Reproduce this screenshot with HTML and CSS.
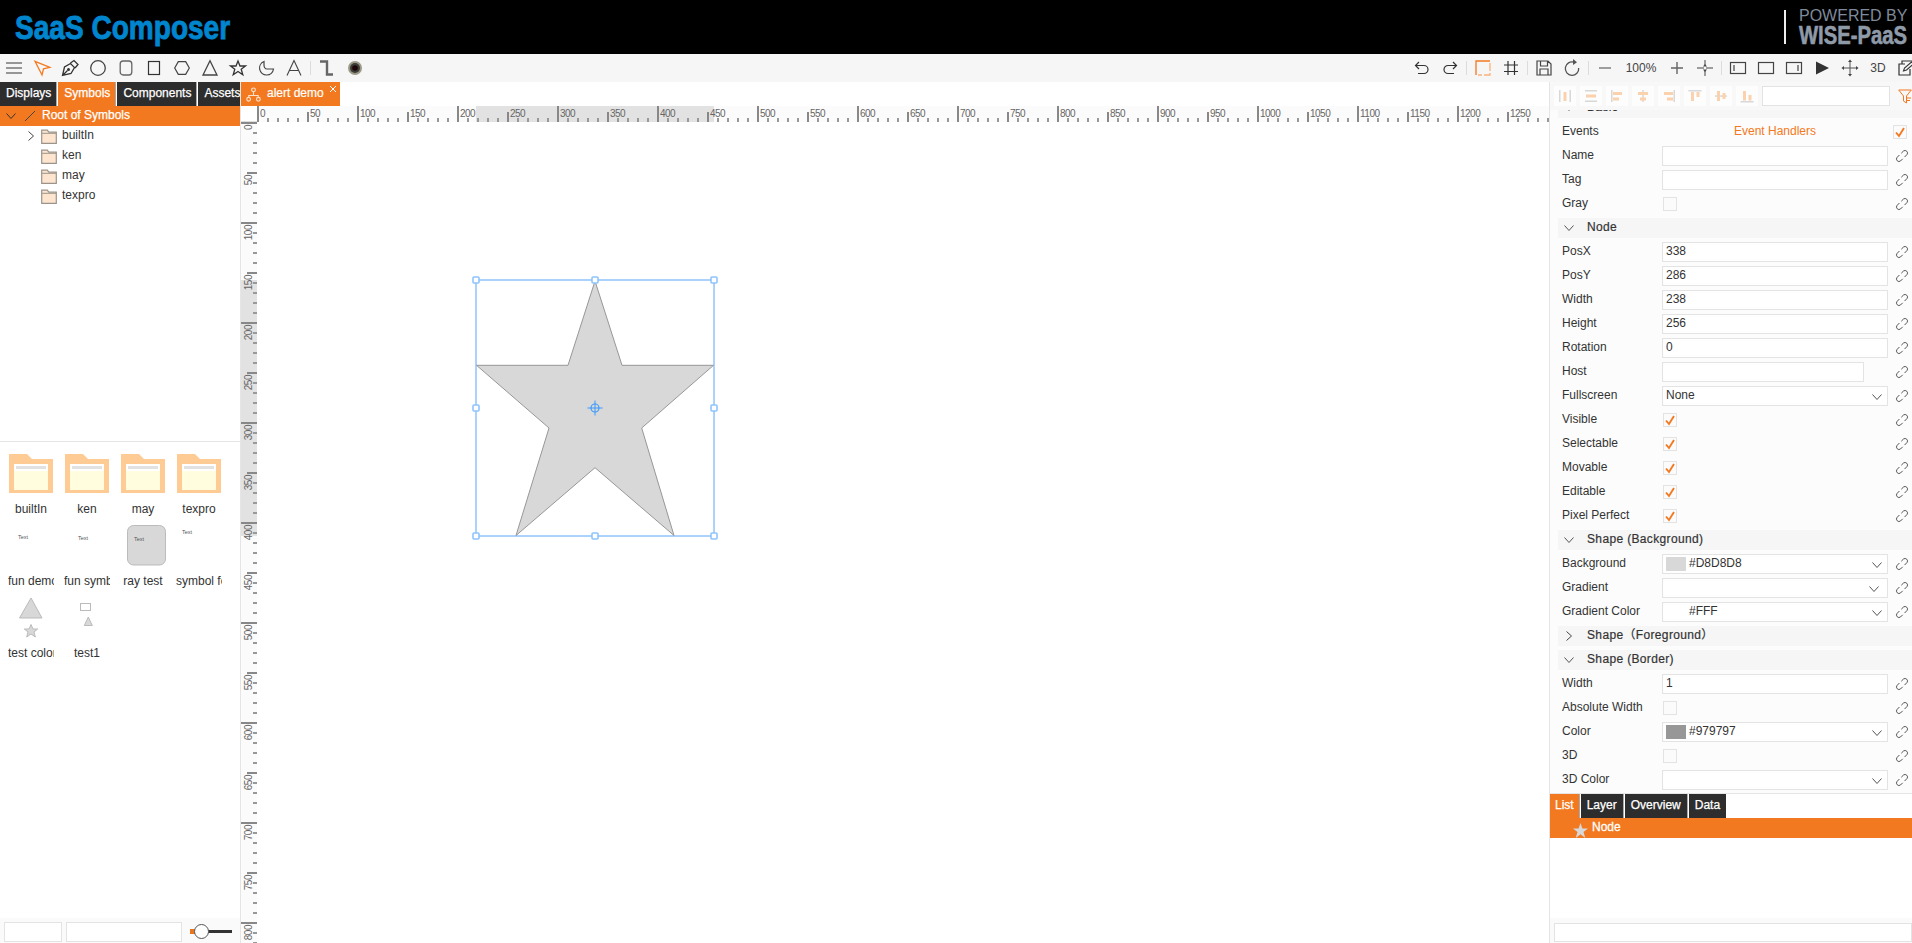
FILE: index.html
```html
<!DOCTYPE html>
<html lang="en">
<head>
<meta charset="utf-8">
<title>SaaS Composer</title>
<link rel="stylesheet" href="styles.css">
</head>
<body>
<svg class="defs" xmlns="http://www.w3.org/2000/svg">
  <symbol id="link" viewBox="0 0 14 14"><path d="M6.3 4.2 8.5 2a2.5 2.5 0 0 1 3.5 3.5L9.6 8M4.4 6 2 8.5A2.5 2.5 0 0 0 5.5 12l2.2-2.2" fill="none" stroke="#555" stroke-width="1"/></symbol>
  <symbol id="chk" viewBox="0 0 14 14"><path d="M3 7.5 6 11 11 3" fill="none" stroke="#f37920" stroke-width="1.9"/></symbol>
  <symbol id="down" viewBox="0 0 12 8"><path d="M1.5 1.5 6 6.5l4.500-5" fill="none" stroke="#555" stroke-width="1"/></symbol>
  <symbol id="right" viewBox="0 0 8 12"><path d="M1.500 1.500 6.500 6l-5 4.500" fill="none" stroke="#444" stroke-width="1"/></symbol>
  <symbol id="tfolder" viewBox="0 0 16 15"><path d="M.7 14.300V1.200h5.600l1.500 2h7.500v11.100z" fill="#fde5cf" stroke="#9c948a" stroke-width="1.200"/><path d="M1 4.300h14" stroke="#9c948a" stroke-width="1"/></symbol>
  <symbol id="bfolder" viewBox="0 0 44 39"><path d="M0 39V0h18l5 5h21v34z" fill="#ffcb94"/><rect x="5" y="10" width="34" height="26" fill="#fffddd"/><rect x="5" y="10" width="34" height="7" fill="#fff"/><rect x="7" y="12" width="30" height="3" fill="#e2e2e2"/></symbol>
</svg>

<header class="topbar">
  <div class="logo"><span>SaaS Composer</span></div>
  <div class="powered">
    <div class="pw1">POWERED BY</div>
    <div class="pw2"><span>WISE-PaaS</span></div>
  </div>
</header>

<nav class="toolbar">
  <div class="tgroup">
    <span class="tb"><svg viewBox="0 0 20 20"><path d="M2 5h16M2 10h16M2 15h16" stroke="#777" stroke-width="1.700"/></svg></span>
    <span class="tb"><svg viewBox="0 0 20 20"><path d="M3 3.300 18 9.300l-6.500 1.500L10 17z" fill="none" stroke="#f37920" stroke-width="1.300"/></svg></span>
    <span class="tb"><svg viewBox="0 0 20 20"><path d="M2.500 17.500 4.500 9l6-3.500 4 4L11 15.500zM2.500 17.500 7.500 12.500" fill="none" stroke="#333" stroke-width="1.300"/><circle cx="8.500" cy="11.500" r="1.500" fill="#333"/><path d="M10.500 5 14 2.500l4 4-3 3.500" fill="none" stroke="#333" stroke-width="1.300"/></svg></span>
    <span class="tb"><svg viewBox="0 0 20 20"><circle cx="10" cy="10" r="7.300" fill="none" stroke="#444" stroke-width="1.300"/></svg></span>
    <span class="tb"><svg viewBox="0 0 20 20"><rect x="4.200" y="3" width="11.600" height="14" rx="3" fill="none" stroke="#666" stroke-width="1.300"/></svg></span>
    <span class="tb"><svg viewBox="0 0 20 20"><rect x="4.500" y="3.500" width="11" height="13" fill="none" stroke="#333" stroke-width="1.200"/></svg></span>
    <span class="tb"><svg viewBox="0 0 20 20"><path d="M2.700 10 6.300 3.700h7.400L17.300 10l-3.600 6.300H6.300z" fill="none" stroke="#444" stroke-width="1.200"/></svg></span>
    <span class="tb"><svg viewBox="0 0 20 20"><path d="M10 2.700 17 17H3z" fill="none" stroke="#444" stroke-width="1.300"/></svg></span>
    <span class="tb"><svg viewBox="0 0 20 20"><path d="m10 3 2 5h5.500l-4.300 3.300 1.600 5.400L10 13.500l-4.800 3.200 1.600-5.400L2.500 8H8z" fill="none" stroke="#333" stroke-width="1.300"/></svg></span>
    <span class="tb"><svg viewBox="0 0 20 20"><path d="M8 3.500A7 7 0 1 0 17.500 11H11C9 11 8 9 8 7z" fill="none" stroke="#444" stroke-width="1.200"/></svg></span>
    <span class="tb"><svg viewBox="0 0 20 20"><path d="M3 17.500 10 2.500l7 15M5.300 12.500h9.400" fill="none" stroke="#444" stroke-width="1.100"/></svg></span>
    <i class="tsep"></i>
    <span class="tb"><svg viewBox="0 0 20 20"><path d="M3 3.500h7v13h6" fill="none" stroke="#666" stroke-width="2.400"/></svg></span>
    <span class="tb"><svg viewBox="0 0 20 20"><circle cx="10" cy="10" r="7" fill="#9a9a86"/><circle cx="10" cy="10" r="5" fill="#3c3c38"/><circle cx="10" cy="10" r="2.800" fill="#1e0606"/></svg></span>
  </div>
  <div class="tgroup tright">
    <span class="tb"><svg viewBox="0 0 20 20"><path d="M7 4 3.500 7.500 7 11M3.500 7.500H12a4 4 0 0 1 0 8H6" fill="none" stroke="#333" stroke-width="1.200"/></svg></span>
    <span class="tb"><svg viewBox="0 0 20 20"><path d="m13 4 3.500 3.500L13 11M16.500 7.500H8a4 4 0 0 0 0 8h6" fill="none" stroke="#333" stroke-width="1.200"/></svg></span>
    <i class="tsep"></i>
    <span class="tb"><svg viewBox="0 0 20 20"><path d="M3 17V3h14" fill="none" stroke="#f37920" stroke-width="1.300"/><path d="M17 5v12H5" fill="none" stroke="#f9b27c" stroke-width="1.300" stroke-dasharray="8 2"/></svg></span>
    <span class="tb"><svg viewBox="0 0 20 20"><path d="M7 3v14M13.500 3v14M3 7h14M3 13.500h14" fill="none" stroke="#333" stroke-width="1.200"/></svg></span>
    <i class="tsep"></i>
    <span class="tb"><svg viewBox="0 0 20 20"><path d="M3 3h11l3 3v11H3zM6.500 3v5h7V3M6 17v-6h8v6" fill="none" stroke="#444" stroke-width="1.200"/></svg></span>
    <span class="tb"><svg viewBox="0 0 20 20"><path d="M12 4.200A6.700 6.700 0 1 0 16.700 10" fill="none" stroke="#555" stroke-width="1.300"/><path d="m11 1 4 3.200-4 2.800z" fill="#555"/></svg></span>
    <i class="tsep"></i>
    <span class="tb"><svg viewBox="0 0 20 20"><path d="M4 10h12" stroke="#888" stroke-width="1.600"/></svg></span>
    <span class="zoomval">100%</span>
    <span class="tb"><svg viewBox="0 0 20 20"><path d="M4 10h12M10 4v12" stroke="#666" stroke-width="1.400"/></svg></span>
    <span class="tb"><svg viewBox="0 0 20 20"><path d="M2 10h5M13 10h5M10 2v5M10 13v5" stroke="#444" stroke-width="1"/><path d="M7 10h2M11 10h2" stroke="#444" stroke-width="1"/><path d="m8 8.500 2-2.500 2 2.500zM8 11.500l2 2.500 2-2.500z" fill="#444"/></svg></span>
    <i class="tsep"></i>
    <span class="tb"><svg viewBox="0 0 20 20"><rect x="2.500" y="4.500" width="15" height="11" fill="none" stroke="#444" stroke-width="1.200"/><path d="M6 7v6" stroke="#444" stroke-width="1.200"/></svg></span>
    <span class="tb"><svg viewBox="0 0 20 20"><rect x="2.500" y="4.500" width="15" height="11" fill="none" stroke="#444" stroke-width="1.200"/></svg></span>
    <span class="tb"><svg viewBox="0 0 20 20"><rect x="2.500" y="4.500" width="15" height="11" fill="none" stroke="#444" stroke-width="1.200"/><path d="M14 7v6" stroke="#444" stroke-width="1.200"/></svg></span>
    <span class="tb"><svg viewBox="0 0 20 20"><path d="M4 3.500 17 10 4 16.500z" fill="#333"/></svg></span>
    <span class="tb"><svg viewBox="0 0 20 20"><path d="M10 4v12M4 10h12" stroke="#555" stroke-width="1"/><path d="m8 4 2-2.500L12 4zM8 16l2 2.500 2-2.500zM4 8 1.500 10 4 12zM16 8l2.500 2-2.500 2z" fill="#444"/></svg></span>
    <span class="tb tb3d">3D</span>
    <span class="tb"><svg viewBox="0 0 20 20"><path d="M9 6H3v11h11v-6M6 6V3h11v6" fill="none" stroke="#333" stroke-width="1.200"/><path d="m7.500 13 1-3 7-6 2 2-7 6z" fill="none" stroke="#333" stroke-width="1.100"/></svg></span>
  </div>
</nav>

<main class="workspace">
  <aside class="left">
    <div class="tabs">
      <span class="tab">Displays</span>
      <span class="tab on">Symbols</span>
      <span class="tab">Components</span>
      <span class="tab last">Assets</span>
    </div>
    <div class="rootrow">
      <svg class="rc" viewBox="0 0 12 8"><path d="M1.500 1.500 6 6.500l4.500-5" fill="none" stroke="#333" stroke-width="1"/></svg>
      <svg class="rs" viewBox="0 0 12 12"><path d="M1 11 11 1" stroke="#444" stroke-width="1"/></svg>
      <span>Root of Symbols</span>
    </div>
    <ul class="tree">
      <li><svg class="tarrow"><use href="#right"/></svg><svg class="tf"><use href="#tfolder"/></svg><span>builtIn</span></li>
      <li><svg class="tf"><use href="#tfolder"/></svg><span>ken</span></li>
      <li><svg class="tf"><use href="#tfolder"/></svg><span>may</span></li>
      <li><svg class="tf"><use href="#tfolder"/></svg><span>texpro</span></li>
    </ul>
    <div class="gallery">
      <div class="cell"><svg class="thumb"><use href="#bfolder"/></svg><div class="cap">builtIn</div></div>
      <div class="cell"><svg class="thumb"><use href="#bfolder"/></svg><div class="cap">ken</div></div>
      <div class="cell"><svg class="thumb"><use href="#bfolder"/></svg><div class="cap">may</div></div>
      <div class="cell"><svg class="thumb"><use href="#bfolder"/></svg><div class="cap">texpro</div></div>
      <div class="cell"><svg class="thumb"><text x="9" y="14" class="tiny">Text</text></svg><div class="cap">fun demo</div></div>
      <div class="cell"><svg class="thumb"><text x="13" y="15" class="tiny">Text</text></svg><div class="cap">fun symbol</div></div>
      <div class="cell"><svg class="thumb"><rect x="6.500" y=".5" width="38" height="39.500" rx="6" fill="#d8d8d8" stroke="#bbb"/><text x="13" y="16" class="tiny">Text</text></svg><div class="cap">ray test</div></div>
      <div class="cell"><svg class="thumb"><text x="5" y="9" class="tiny">Text</text></svg><div class="cap">symbol for test</div></div>
      <div class="cell"><svg class="thumb"><path d="M22 1 33 21H10.500z" fill="#d8d8d8" stroke="#bbb"/><path d="m22 27.500 2 4.500h4.700l-3.700 3 1.300 5L22 37l-4.300 3 1.300-5-3.700-3H20z" fill="#d8d8d8" stroke="#bbb"/></svg><div class="cap">test color</div></div>
      <div class="cell"><svg class="thumb"><rect x="15.500" y="6.500" width="10" height="7" fill="#fff" stroke="#bbb"/><path d="m23.300 20 4 8.500h-8z" fill="#d8d8d8" stroke="#bbb"/></svg><div class="cap">test1</div></div>
    </div>
    <div class="lfoot">
      <div class="lf1"></div>
      <div class="lf2"></div>
      <div class="slider"><i class="sl-o"></i><i class="sl-k"></i><i class="sl-t"></i></div>
    </div>
  </aside>

  <section class="center">
    <div class="doctabs">
      <div class="doctab">
        <svg class="dicon" viewBox="0 0 16 16"><circle cx="8" cy="3" r="2" fill="none" stroke="#fde0c8" stroke-width="1.200"/><circle cx="2.800" cy="13" r="2" fill="none" stroke="#fde0c8" stroke-width="1.200"/><circle cx="13.200" cy="13" r="2" fill="none" stroke="#fde0c8" stroke-width="1.200"/><path d="M8 5v4M3 11V9h10v2" fill="none" stroke="#fde0c8" stroke-width="1.200"/></svg>
        <span>alert demo</span>
        <svg class="dclose" viewBox="0 0 8 8"><path d="m1 1 6 6M7 1 1 7" stroke="#fff" stroke-width="1"/></svg>
      </div>
    </div>
    <div class="ruler-top">
      <div class="corner"></div>
      <div class="rh"><span>0</span><span>50</span><span>100</span><span>150</span><span>200</span><span>250</span><span>300</span><span>350</span><span>400</span><span>450</span><span>500</span><span>550</span><span>600</span><span>650</span><span>700</span><span>750</span><span>800</span><span>850</span><span>900</span><span>950</span><span>1000</span><span>1050</span><span>1100</span><span>1150</span><span>1200</span><span>1250</span></div>
    </div>
    <div class="stage">
      <div class="rv"><span><b>0</b></span><span><b>50</b></span><span><b>100</b></span><span><b>150</b></span><span><b>200</b></span><span><b>250</b></span><span><b>300</b></span><span><b>350</b></span><span><b>400</b></span><span><b>450</b></span><span><b>500</b></span><span><b>550</b></span><span><b>600</b></span><span><b>650</b></span><span><b>700</b></span><span><b>750</b></span><span><b>800</b></span></div>
      <div class="canvas">
        <svg class="shape" viewBox="-5 -5 248 266">
          <rect x="0" y="0" width="238" height="256" fill="none" stroke="#8fc4fc" stroke-width="1.500"/>
          <path d="M119 1 146 85.300H237.500L165.700 148 198 255.500 119 187.700 40 255.500 73 148 .5 85.300H92z" fill="#d8d8d8" stroke="#979797" stroke-width="1"/>
          <g fill="#fff" stroke="#8fc4fc" stroke-width="1.600">
            <rect x="-3" y="-3" width="6" height="6" rx="1"/><rect x="116" y="-3" width="6" height="6" rx="1"/><rect x="235" y="-3" width="6" height="6" rx="1"/>
            <rect x="-3" y="125" width="6" height="6" rx="1"/><rect x="235" y="125" width="6" height="6" rx="1"/>
            <rect x="-3" y="253" width="6" height="6" rx="1"/><rect x="116" y="253" width="6" height="6" rx="1"/><rect x="235" y="253" width="6" height="6" rx="1"/>
          </g>
          <circle cx="119" cy="128" r="4" fill="none" stroke="#3b99fc" stroke-width="1.200"/>
          <path d="M111.500 128h15M119 120.500v15" stroke="#3b99fc" stroke-width="1"/>
        </svg>
      </div>
    </div>
  </section>

  <aside class="right">
    <div class="aligns">
      <span class="al"><svg viewBox="0 0 16 16"><path d="M2 2h1.500v12H2zM12.500 2H14v12h-1.500z" fill="#d8d8d8"/><rect x="6.500" y="4" width="3" height="9" fill="#fbd2ae"/></svg></span>
      <span class="al"><svg viewBox="0 0 16 16"><path d="M2 2h12v1.500H2zM2 12.500h12V14H2z" fill="#d8d8d8"/><rect x="3" y="6.500" width="10" height="3" fill="#fbd2ae"/></svg></span>
      <span class="al"><svg viewBox="0 0 16 16"><rect x="2" y="2" width="1.500" height="12" fill="#d8d8d8"/><path d="M4 4h9v3H4zM4 9.500h6v3H4z" fill="#fbd2ae"/></svg></span>
      <span class="al"><svg viewBox="0 0 16 16"><rect x="7.300" y="2" width="1.500" height="12" fill="#d8d8d8"/><path d="M3 4h10v3H3zM5 9.500h6v3H5z" fill="#fbd2ae"/></svg></span>
      <span class="al"><svg viewBox="0 0 16 16"><rect x="12.500" y="2" width="1.500" height="12" fill="#d8d8d8"/><path d="M3 4h9v3H3zM6 9.500h6v3H6z" fill="#fbd2ae"/></svg></span>
      <span class="al"><svg viewBox="0 0 16 16"><rect x="1.500" y="2" width="13" height="1.500" fill="#d8d8d8"/><path d="M4 4h3v9H4zM9.500 4h3v5h-3z" fill="#fbd2ae"/></svg></span>
      <span class="al"><svg viewBox="0 0 16 16"><rect x="2" y="7.300" width="12" height="1.500" fill="#d8d8d8"/><path d="M4 3h3v10H4zM9.500 5h3v6h-3z" fill="#fbd2ae"/></svg></span>
      <span class="al"><svg viewBox="0 0 16 16"><rect x="1.500" y="13" width="13" height="1.500" fill="#d8d8d8"/><path d="M4 3h3v9.500H4zM9.500 7h3v5.500h-3z" fill="#fbd2ae"/></svg></span>
      <div class="alinput"></div>
      <svg class="funnel" viewBox="0 0 14 15"><path d="M.7 1h12.600L8.500 7v7l-3-2V7z" fill="none" stroke="#f37920" stroke-width="1"/><path d="M9 9h4M9 11.500h3" stroke="#f37920" stroke-width="1"/></svg>
    </div>
    <div class="props">
      <div class="proplist">
        <div class="sec"><svg class="sd"><use href="#down"/></svg><span>Basic</span></div>
        <div class="row"><label>Events</label><span class="evh">Event Handlers</span><span class="cb ev"><svg><use href="#chk"/></svg></span></div>
        <div class="row"><label>Name</label><div class="fld"></div><svg class="lnk"><use href="#link"/></svg></div>
        <div class="row"><label>Tag</label><div class="fld"></div><svg class="lnk"><use href="#link"/></svg></div>
        <div class="row"><label>Gray</label><span class="cb"></span><svg class="lnk"><use href="#link"/></svg></div>

        <div class="sec"><svg class="sd"><use href="#down"/></svg><span>Node</span></div>
        <div class="row"><label>PosX</label><div class="fld">338</div><svg class="lnk"><use href="#link"/></svg></div>
        <div class="row"><label>PosY</label><div class="fld">286</div><svg class="lnk"><use href="#link"/></svg></div>
        <div class="row"><label>Width</label><div class="fld">238</div><svg class="lnk"><use href="#link"/></svg></div>
        <div class="row"><label>Height</label><div class="fld">256</div><svg class="lnk"><use href="#link"/></svg></div>
        <div class="row"><label>Rotation</label><div class="fld">0</div><svg class="lnk"><use href="#link"/></svg></div>
        <div class="row"><label>Host</label><div class="fld short"></div><svg class="lnk"><use href="#link"/></svg></div>
        <div class="row"><label>Fullscreen</label><div class="fld sel">None<svg class="dd"><use href="#down"/></svg></div><svg class="lnk"><use href="#link"/></svg></div>
        <div class="row"><label>Visible</label><span class="cb"><svg><use href="#chk"/></svg></span><svg class="lnk"><use href="#link"/></svg></div>
        <div class="row"><label>Selectable</label><span class="cb"><svg><use href="#chk"/></svg></span><svg class="lnk"><use href="#link"/></svg></div>
        <div class="row"><label>Movable</label><span class="cb"><svg><use href="#chk"/></svg></span><svg class="lnk"><use href="#link"/></svg></div>
        <div class="row"><label>Editable</label><span class="cb"><svg><use href="#chk"/></svg></span><svg class="lnk"><use href="#link"/></svg></div>
        <div class="row"><label>Pixel Perfect</label><span class="cb"><svg><use href="#chk"/></svg></span><svg class="lnk"><use href="#link"/></svg></div>

        <div class="sec"><svg class="sd"><use href="#down"/></svg><span>Shape (Background)</span></div>
        <div class="row"><label>Background</label><div class="fld sel"><i class="sw s-d8"></i>#D8D8D8<svg class="dd"><use href="#down"/></svg></div><svg class="lnk"><use href="#link"/></svg></div>
        <div class="row"><label>Gradient</label><div class="fld sel"><svg class="dd left3"><use href="#down"/></svg></div><svg class="lnk"><use href="#link"/></svg></div>
        <div class="row"><label>Gradient Color</label><div class="fld sel"><i class="sw"></i>#FFF<svg class="dd"><use href="#down"/></svg></div><svg class="lnk"><use href="#link"/></svg></div>

        <div class="sec"><svg class="sr"><use href="#right"/></svg><span>Shape（Foreground）</span></div>
        <div class="sec"><svg class="sd"><use href="#down"/></svg><span>Shape (Border)</span></div>
        <div class="row"><label>Width</label><div class="fld">1</div><svg class="lnk"><use href="#link"/></svg></div>
        <div class="row"><label>Absolute Width</label><span class="cb"></span><svg class="lnk"><use href="#link"/></svg></div>
        <div class="row"><label>Color</label><div class="fld sel"><i class="sw s-97"></i>#979797<svg class="dd"><use href="#down"/></svg></div><svg class="lnk"><use href="#link"/></svg></div>
        <div class="row"><label>3D</label><span class="cb"></span><svg class="lnk"><use href="#link"/></svg></div>
        <div class="row"><label>3D Color</label><div class="fld sel"><svg class="dd"><use href="#down"/></svg></div><svg class="lnk"><use href="#link"/></svg></div>
      </div>
    </div>
    <div class="btabs">
      <span class="btab on">List</span>
      <span class="btab">Layer</span>
      <span class="btab">Overview</span>
      <span class="btab">Data</span>
    </div>
    <div class="noderow">
      <svg class="nstar" viewBox="0 0 16 16"><path d="m8 0 2 5.800h6l-4.800 3.700 1.900 6.500L8 12l-5.100 4 1.900-6.500L0 5.800h6z" fill="#d8d8d8"/></svg>
      <span>Node</span>
    </div>
    <div class="listspace"></div>
    <div class="rfoot"><div class="rfinput"></div></div>
  </aside>
</main>
</body>
</html>
```

FILE: styles.css
```css
* { box-sizing: border-box; }
html, body { margin: 0; height: 100%; }
body {
  width: 1912px;
  height: 943px;
  overflow: hidden;
  display: flex;
  flex-direction: column;
  font: 12px/16px "Liberation Sans", "Noto Sans CJK SC", sans-serif;
  color: #333;
  background: #fff;
}
.defs { display: none; }

/* top bar */
.topbar {
  flex: 0 0 54px;
  background: #000;
  display: flex;
  justify-content: space-between;
  align-items: center;
}
.logo { padding-left: 15px; width: 300px; }
.logo span {
  display: inline-block;
  font-size: 34px;
  line-height: 40px;
  font-weight: 700;
  color: #0085cf;
  -webkit-text-stroke: .9px #0085cf;
  transform: scaleX(.825);
  transform-origin: left center;
  white-space: nowrap;
}
.powered {
  width: 128px;
  height: 34px;
  border-left: 2px solid #eee;
  padding-left: 13px;
}
.pw1 { font-size: 16px; line-height: 16px; color: #7e8a9a; white-space: nowrap; margin-top: -2px; }
.pw2 { height: 20px; line-height: 22px; white-space: nowrap; }
.pw2 span {
  display: inline-block;
  font-size: 25px;
  font-weight: 700;
  color: #8f9aa8;
  -webkit-text-stroke: .6px #8f9aa8;
  transform: scaleX(.81);
  transform-origin: left center;
}

/* main toolbar */
.toolbar {
  flex: 0 0 28px;
  background: #f6f6f6;
  display: flex;
  justify-content: space-between;
  overflow: hidden;
}
.tgroup { display: flex; align-items: center; }
.tright { margin-right: -8px; }
.tb {
  width: 28px;
  height: 28px;
  flex: none;
  display: flex;
  align-items: center;
  justify-content: center;
}
.tb svg { width: 20px; height: 20px; }
.tsep { width: 5px; height: 14px; flex: none; background: linear-gradient(#dcdcdc, #dcdcdc) center / 1px 100% no-repeat; }
.zoomval { width: 44px; text-align: center; color: #444; }
.tb3d { color: #444; }

/* workspace */
.workspace { flex: 1; display: flex; min-height: 0; }

/* left */
.left {
  flex: 0 0 241px;
  min-width: 0;
  border-right: 1px solid #e5e5e5;
  display: flex;
  flex-direction: column;
}
.tabs { display: flex; height: 24px; background: #fff; overflow: hidden; }
.tab {
  height: 24px;
  line-height: 22px;
  padding: 0 5px 0 6px;
  background: #2d2d2d;
  color: #fff;
  -webkit-text-stroke: .25px #fff;
  border-right: 1px solid #aaa;
  white-space: nowrap;
  margin-right: 1px;
}
.tab.on { background: #f37920; }
.tab.last { flex: 1; min-width: 0; border: 0; margin: 0; overflow: hidden; padding-right: 0; }
.rootrow {
  height: 20px;
  background: #f37920;
  color: #fff;
  -webkit-text-stroke: .25px #fff;
  display: flex;
  align-items: center;
}
.rc { width: 12px; height: 8px; margin-left: 5px; }
.rs { width: 12px; height: 12px; margin-left: 7px; }
.rootrow span { margin-left: 6px; margin-bottom: 2px; }
.tree {
  list-style: none;
  margin: 0;
  padding: 0 0 0 41px;
  height: 316px;
  border-bottom: 1px solid #e5e5e5;
  flex: none;
}
.tree li { height: 20px; display: flex; align-items: center; position: relative; color: #333; }
.tree li span { margin-bottom: 2px; }
.tf { width: 16px; height: 15px; margin-right: 5px; }
.tarrow { position: absolute; left: -14px; top: 4px; width: 8px; height: 12px; }
.gallery {
  flex: 1;
  display: grid;
  grid-template-columns: repeat(4, 56px);
  grid-auto-rows: 72px;
  padding: 11px 0 0 3px;
}
.cell { display: flex; flex-direction: column; align-items: center; }
.thumb { width: 44px; height: 41px; flex: none; overflow: visible; }
.tiny { font: 5.500px "Liberation Sans", sans-serif; fill: #555; }
.cap {
  width: 46px;
  margin-top: 7px;
  line-height: 16px;
  text-align: center;
  white-space: nowrap;
  overflow: hidden;
  color: #333;
}
.lfoot {
  height: 25px;
  flex: none;
  background: #fafafa;
  display: flex;
  align-items: center;
  padding: 2px 0 0 4px;
}
.lf1, .lf2 { height: 20px; border: 1px solid #e3e3e3; background: #fff; }
.lf1 { width: 58px; margin-right: 4px; }
.lf2 { width: 116px; margin-right: 8px; }
.slider { display: flex; align-items: center; }
.sl-o { width: 5px; height: 5px; background: #e87722; }
.sl-k { width: 15px; height: 15px; border: 1.500px solid #555; border-radius: 50%; background: #fff; margin-left: -1px; position: relative; }
.sl-t { width: 24px; height: 3px; background: #333; margin-left: -1px; }

/* center */
.center { flex: 1; min-width: 0; display: flex; flex-direction: column; }
.doctabs { height: 24px; flex: none; display: flex; }
.doctab {
  width: 99px;
  background: #f37920;
  color: #fff;
  -webkit-text-stroke: .2px #fff;
  display: flex;
  align-items: center;
  position: relative;
  padding-left: 5px;
}
.doctab span { margin-bottom: 2px; }
.dicon { width: 15px; height: 15px; margin-right: 6px; }
.dclose { position: absolute; right: 3px; top: 3px; width: 8px; height: 8px; }
.ruler-top { height: 16px; flex: none; display: flex; }
.corner { width: 16px; flex: none; background: #fff; border-bottom: 1px solid #ddd; }
.rh {
  flex: 1;
  min-width: 0;
  display: flex;
  overflow: hidden;
  background-color: #fbfbfb;
  background-image:
    linear-gradient(to right, #888 2px, transparent 2px),
    linear-gradient(to right, #888 2px, transparent 2px),
    linear-gradient(to right, #999 2px, transparent 2px),
    linear-gradient(#e2e2e2, #e2e2e2);
  background-size: 100px 16px, 50px 10px, 10px 4px, 238px 16px;
  background-position: 0 100%, 0 100%, 0 100%, 219px 0;
  background-repeat: repeat-x, repeat-x, repeat-x, no-repeat;
}
.rh span {
  flex: 0 0 50px;
  padding: 2px 0 0 3px;
  font-size: 10px;
  letter-spacing: -.5px;
  line-height: 12px;
  color: #666;
}
.stage { flex: 1; min-height: 0; display: flex; }
.rv {
  width: 16px;
  flex: none;
  overflow: hidden;
  background-color: #fbfbfb;
  background-image:
    linear-gradient(#888 2px, transparent 2px),
    linear-gradient(#888 2px, transparent 2px),
    linear-gradient(#999 2px, transparent 2px),
    linear-gradient(#e2e2e2, #e2e2e2);
  background-size: 16px 100px, 10px 50px, 4px 10px, 16px 256px;
  background-position: 100% 0, 100% 0, 100% 0, 0 158px;
  background-repeat: repeat-y, repeat-y, repeat-y, no-repeat;
}
.rv span { display: block; height: 50px; padding: 3px 0 0 3px; }
.rv b {
  display: block;
  width: 10px;
  font-size: 10px;
  font-weight: 400;
  letter-spacing: -.5px;
  line-height: 10px;
  color: #666;
  writing-mode: vertical-rl;
  transform: rotate(180deg);
  white-space: nowrap;
}
.canvas { flex: 1; position: relative; background: #fff; overflow: hidden; }
.shape { position: absolute; left: 214px; top: 153px; width: 248px; height: 266px; }

/* right */
.right {
  flex: 0 0 363px;
  min-width: 0;
  border-left: 1px solid #e5e5e5;
  display: flex;
  flex-direction: column;
  min-height: 0;
}
.aligns {
  height: 28px;
  flex: none;
  background: #f8f8f8;
  display: flex;
  align-items: center;
  padding: 0 0 0 4px;
  gap: 4px;
  position: relative;
  z-index: 1;
}
.al { width: 22px; height: 20px; background: #fdfdfd; display: flex; align-items: center; justify-content: center; }
.al svg { width: 16px; height: 16px; }
.alinput { width: 128px; height: 20px; background: #fff; border: 1px solid #e3e3e3; }
.funnel { width: 14px; height: 15px; margin-left: 4px; }
.props { height: 684px; flex: none; overflow: hidden; background: #fcfcfc; border-bottom: 1px solid #e5e5e5; }
.proplist { margin-top: -14px; }
.sec {
  height: 20px;
  margin: 2px 0 2px 8px;
  background: #f6f6f6;
  display: flex;
  align-items: center;
  position: relative;
  padding-left: 29px;
  letter-spacing: .35px;
  -webkit-text-stroke: .2px #333;
}
.sec span { margin-bottom: 2px; }
.sec + .sec { margin-top: 4px; }
.sd { position: absolute; left: 5px; top: 6px; width: 12px; height: 8px; }
.sr { position: absolute; left: 7px; top: 4px; width: 8px; height: 12px; }
.row {
  height: 24px;
  display: grid;
  grid-template-columns: 100px 226px 1fr;
  align-items: center;
  padding-left: 12px;
}
.row label { padding-bottom: 2px; color: #333; white-space: nowrap; }
.fld {
  height: 20px;
  line-height: 17px;
  background: #fff;
  border: 1px solid #e3e3e3;
  padding: 0 0 2px 3px;
  color: #333;
  display: flex;
  align-items: center;
  position: relative;
}
.fld.short { width: 202px; }
.dd { position: absolute; right: 4px; top: 6px; width: 12px; height: 8px; }
.dd.left3 { right: 7px; }
.sw { width: 20px; height: 14px; margin-right: 3px; flex: none; margin-top: 2px; }
.s-d8 { background: #d8d8d8; }
.s-97 { background: #979797; }
.cb {
  width: 14px;
  height: 14px;
  margin-left: 1px;
  background: #fbfbfb;
  border: 1px solid #e3e3e3;
  display: block;
  position: relative;
}
.cb svg { position: absolute; left: -1px; top: -1px; width: 14px; height: 14px; }
.cb.ev { margin-left: 5px; }
.lnk { width: 14px; height: 14px; margin-left: 7px; }
.evh { text-align: center; color: #f37920; padding-bottom: 3px; }
.btabs { height: 24px; flex: none; display: flex; background: #fff; }
.btab {
  line-height: 22px;
  padding: 0 6px;
  margin-right: 1px;
  background: #2d2d2d;
  color: #fff;
  -webkit-text-stroke: .25px #fff;
  border-right: 1px solid #aaa;
}
.btab:last-child { border: 0; margin: 0; }
.btab.on { background: #f37920; padding: 0 5px; }
.noderow {
  height: 20px;
  flex: none;
  background: #f37920;
  color: #fff;
  -webkit-text-stroke: .3px #fff;
  display: flex;
  align-items: center;
  padding-left: 23px;
}
.noderow span { margin-left: 4px; margin-bottom: 2px; }
.nstar { width: 15px; height: 15px; margin-top: 4px; flex: none; }
.listspace { flex: 1; background: #fff; }
.rfoot { height: 25px; flex: none; background: #fafafa; padding: 5px 0 0 4px; overflow: hidden; }
.rfinput { height: 19px; width: 100%; background: #fff; border: 1px solid #e3e3e3; }
```
